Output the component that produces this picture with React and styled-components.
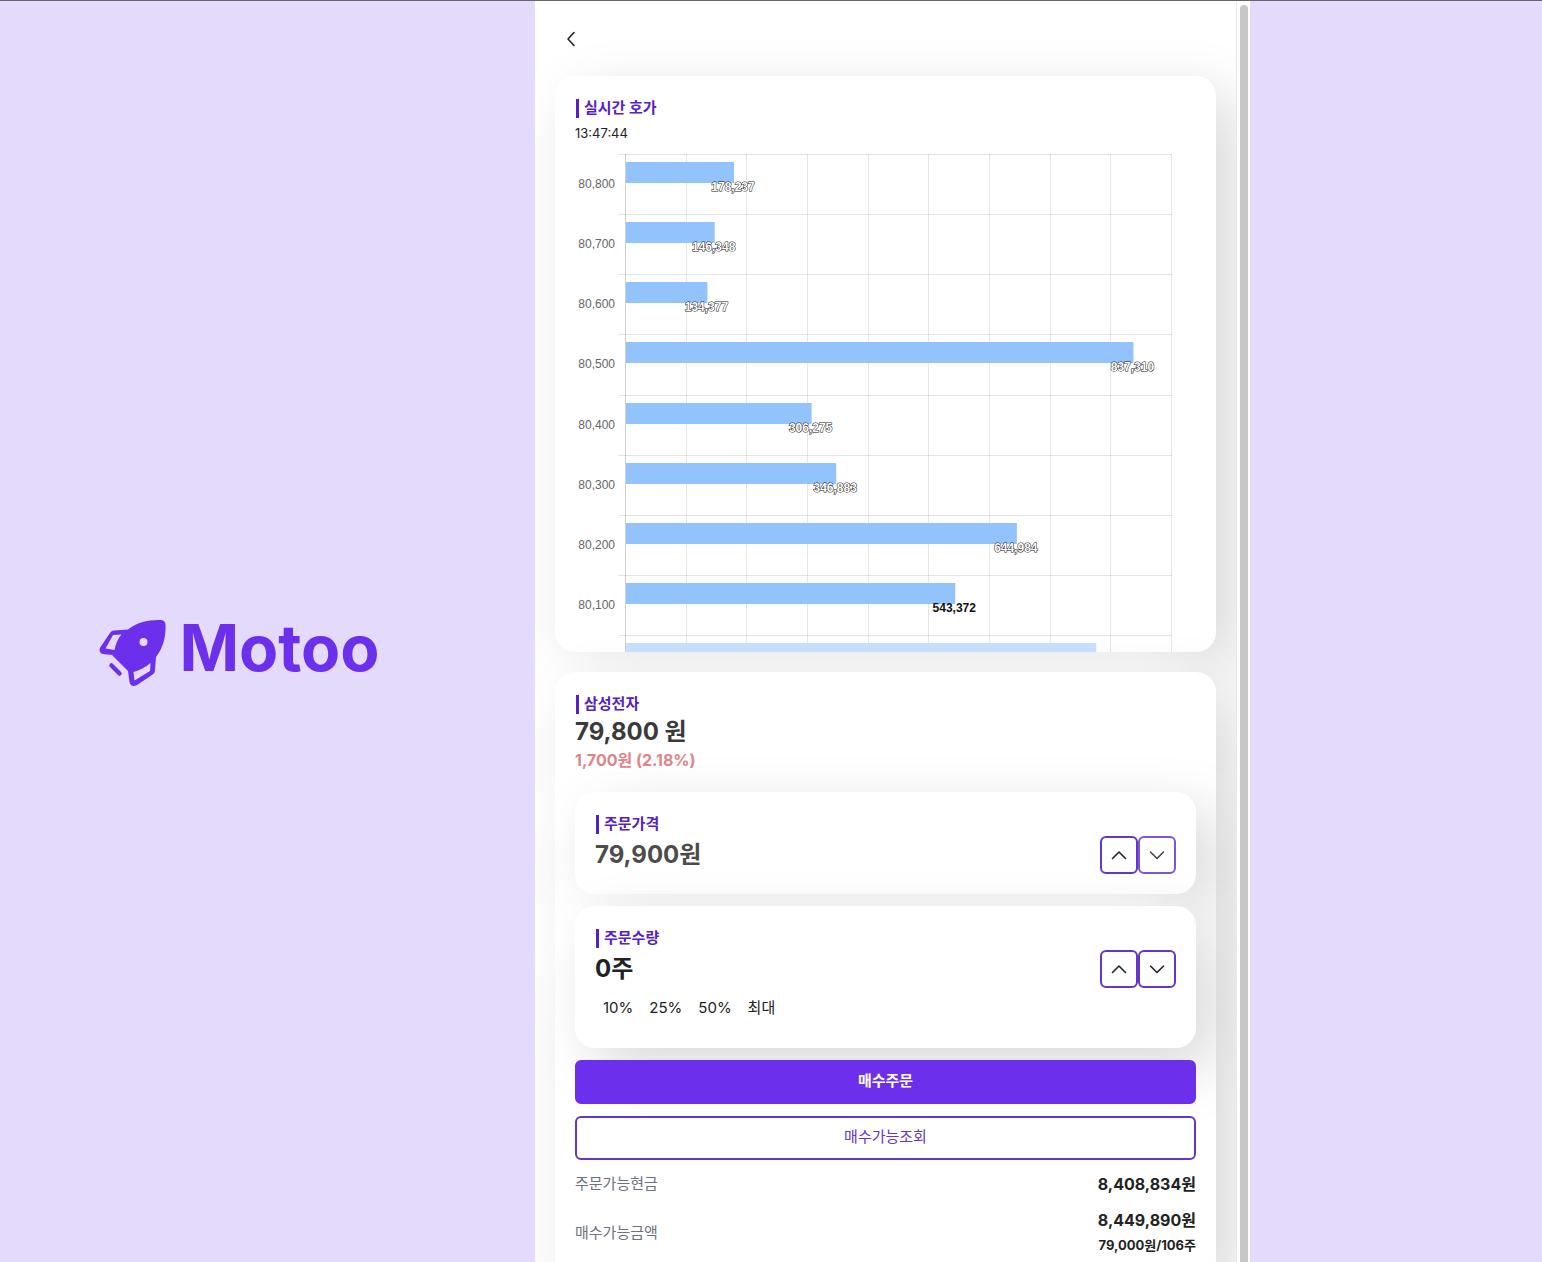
import React, { useId, useState } from "react";
import styled, { createGlobalStyle } from "styled-components";

const GlobalStyle = createGlobalStyle`
  *, *::before, *::after { box-sizing: border-box; }
  body {
    margin: 0;
    color: #222;
    font-family: Inter, "Noto Sans CJK KR", sans-serif;
  }
  h1, h2, p, dl, dd { margin: 0; }
  button { font-family: inherit; cursor: pointer; }
`;

const Page = styled.div`
  display: grid;
  grid-template-columns: minmax(0, 1fr) minmax(0, 716px) minmax(0, 291px);
  height: 100vh;
  background: #e4dafc;
  border-top: 1px solid #666;
`;

const Brand = styled.aside`
  display: flex;
  align-items: center;
  justify-content: center;
  gap: 12px;
  padding: 42px 56px 0 0;
  color: #6c30ec;
`;

const Wordmark = styled.h1`
  padding-bottom: 10px;
  font-size: 64px;
  line-height: 80px;
  font-weight: 700;
`;

const Screen = styled.main`
  display: flex;
  min-width: 0;
  min-height: 0;
  background: #fff;
`;

const Scroller = styled.div`
  flex: 1;
  min-width: 0;
  overflow-y: auto;
  overflow-x: hidden;
  scrollbar-width: none;
  padding: 20px 20px 40px;
`;

const Rail = styled.div`
  flex: none;
  width: 15px;
  padding: 4px 2px 0 3px;
  overflow: hidden;
  background: #fff;
  border-left: 1px solid #e8e8e8;
  border-right: 1px solid #e0e0e0;
`;

const Thumb = styled.div`
  width: 8px;
  height: 120%;
  border-radius: 4px;
  background: #c7c7c7;
`;

const BackButton = styled.button`
  display: flex;
  align-items: center;
  justify-content: center;
  width: 32px;
  height: 36px;
  margin-bottom: 19px;
  padding: 0;
  border: 0;
  background: none;
  color: #222;
`;

const Card = styled.section`
  padding: 20px;
  border-radius: 20px;
  background: #fff;
  box-shadow: 20px 20px 60px #d9d9d9, -20px -20px 60px #fff;
`;

const QuoteCard = styled(Card)`
  height: 576px;
  margin-bottom: 20px;
  overflow: hidden;
`;

const OrderCard = styled(Card)`
  margin-bottom: 12px;
`;

const Title = styled.h2`
  display: flex;
  align-items: center;
  gap: 5px;
  height: 24px;
  font-size: 15px;
  line-height: 24px;
  font-weight: 700;
  color: #5321c6;

  &::before {
    content: "";
    width: 3px;
    height: 19px;
    margin-left: 1px;
    background: #5321c6;
  }
`;

const Clock = styled.p`
  font-size: 13px;
  line-height: 26px;
`;

const Price = styled.p`
  font-size: 24px;
  line-height: 32px;
  font-weight: 700;
  color: ${(p) => p.$color || "#222"};
`;

const Change = styled.p`
  margin-bottom: 20px;
  font-size: 16px;
  line-height: 24px;
  font-weight: 700;
  color: #de8587;
`;

const OrderRow = styled.div`
  display: flex;
  align-items: center;
  justify-content: space-between;
  height: 38px;
`;

const Stepper = styled.div`
  display: flex;
`;

const StepButton = styled.button`
  display: flex;
  align-items: center;
  justify-content: center;
  width: 38px;
  height: 38px;
  padding: 0;
  border: 2px solid ${(p) => (p.$soft ? "#7d55d6" : "#6335c8")};
  border-radius: 6px;
  background: #fff;
  color: ${(p) => (p.$soft ? "#444" : "#222")};
`;

const Ratios = styled.div`
  display: flex;
  gap: 16px;
  padding: 8px 8px;
`;

const Ratio = styled.button`
  padding: 0;
  border: 0;
  background: none;
  font-size: 15px;
  line-height: 24px;
  color: #222;
`;

const Action = styled.button`
  display: block;
  width: 100%;
  height: 44px;
  margin-bottom: 12px;
  border: 2px solid ${(p) => (p.$primary ? "#6c30ec" : "#6335c8")};
  border-radius: 6px;
  background: ${(p) => (p.$primary ? "#6c30ec" : "#fff")};
  color: ${(p) => (p.$primary ? "#fff" : "#6335c8")};
  font-size: 15px;
  font-weight: ${(p) => (p.$primary ? 700 : 400)};
  line-height: 20px;
  padding: 0 0 2px;
`;

const Summary = styled.dl`
  display: grid;
  gap: 12px;
`;

const SummaryRow = styled.div`
  display: flex;
  align-items: center;
  justify-content: space-between;
`;

const Term = styled.dt`
  font-size: 15px;
  line-height: 24px;
  color: #6b7280;
`;

const Amount = styled.dd`
  font-size: 16px;
  line-height: 24px;
  font-weight: 700;
  text-align: right;
`;

const Detail = styled.span`
  display: block;
  font-size: 13px;
  line-height: 26px;
`;

const Chart = styled.svg`
  display: block;
  width: 100%;
  height: auto;
  font-family: "Liberation Sans", sans-serif;
`;

const AxisLabel = styled.text`
  font-size: 12px;
  fill: #666;
`;

const ValueLabel = styled.text`
  font-size: 12px;
  font-weight: 700;
  fill: ${(p) => (p.$soft ? "#fff" : "#111")};
  stroke: ${(p) => (p.$soft ? "#111" : "none")};
  stroke-width: ${(p) => (p.$soft ? "1px" : "0")};
  paint-order: stroke;
`;

const quotes = [
  { price: "80,800", value: 178237 },
  { price: "80,700", value: 146348 },
  { price: "80,600", value: 134377 },
  { price: "80,500", value: 837310 },
  { price: "80,400", value: 306275 },
  { price: "80,300", value: 346883 },
  { price: "80,200", value: 644984 },
  { price: "80,100", value: 543372, settled: true },
  { price: "80,000", value: 776000, bid: true },
];

const AXIS = 50;
const STEP_X = 60.65;
const STEP_Y = 60.15;

function QuoteChart() {
  const columns = Array.from({ length: 10 }, (_, i) => Math.round(AXIS + i * STEP_X) + 0.5);
  return (
    <Chart viewBox="0 0 621 520" role="img" aria-label="실시간 호가">
      {columns.map((x, i) => (
        <path key={x} d={`M${x} 8V520`} stroke={i ? "#e6e6e6" : "#cfcfcf"} />
      ))}
      {quotes.map((q, i) => {
        const y = Math.round(8 + i * STEP_Y);
        const end = 51 + (q.value / 100000) * 60.6;
        return (
          <g key={q.price}>
            <path d={`M43 ${y + 0.5}H597`} stroke="#000" strokeOpacity=".1" />
            <rect x="51" y={y + 8} width={end - 51} height="21" fill={q.bid ? "#c6dffb" : "#93c3fd"} />
            {!q.bid && (
              <>
                <AxisLabel x="40" y={y + 34} textAnchor="end">{q.price}</AxisLabel>
                <ValueLabel x={end - 1} y={y + 37} textAnchor="middle" $soft={!q.settled}>
                  {q.value.toLocaleString("en-US")}
                </ValueLabel>
              </>
            )}
          </g>
        );
      })}
    </Chart>
  );
}

function Chevron({ d, w = 16, h = 10 }) {
  return (
    <svg width={w} height={h} viewBox={`0 0 ${w} ${h}`} fill="none" stroke="currentColor" strokeWidth="1.6" strokeLinecap="round" strokeLinejoin="round" aria-hidden="true">
      <path d={d} />
    </svg>
  );
}

function StepPair({ name, onStep, soft }) {
  return (
    <Stepper>
      <StepButton aria-label={`${name} 올리기`} onClick={() => onStep(1)}>
        <Chevron d="M1.5 8.5 8 2l6.5 6.5" />
      </StepButton>
      <StepButton aria-label={`${name} 내리기`} $soft={soft} onClick={() => onStep(-1)}>
        <Chevron d="M1.5 2 8 8.5 14.5 2" />
      </StepButton>
    </Stepper>
  );
}

function Rocket() {
  return (
    <svg width="68" height="68" viewBox="0 0 68 68" aria-hidden="true">
      <path
        fill="currentColor"
        fillRule="evenodd"
        d="M29 10.500C38 3 50 .5 62 1C65 1.200 66.500 3 66.500 6C67 18 64 29 57 38L56 51C56 53 55 55 53 56L38 66C34 68 31 66.500 30.500 63L29 52L13 36L4 35C.5 34.500-.5 31 1.500 28L11 14C12 12.500 13 11.500 15 11.500ZM14 16 6.500 29.500 15.500 31C16.500 26 18.500 20 22.500 15.500ZM34.500 53 35.500 61.500 51 52 51.500 44C46.500 48 40.500 51.500 34.500 53ZM44.500 19A4 4 0 1 0 44.500 27A4 4 0 1 0 44.500 19Z"
      />
      <path d="m12.500 46.500 8 8" stroke="currentColor" strokeWidth="4.500" strokeLinecap="round" />
    </svg>
  );
}

export default function App() {
  const quoteId = useId();
  const stockId = useId();
  const [price, setPrice] = useState(79900);
  const [count, setCount] = useState(0);

  return (
    <>
      <GlobalStyle />
      <Page>
        <Brand>
          <Rocket />
          <Wordmark>Motoo</Wordmark>
        </Brand>
        <Screen>
          <Scroller>
            <BackButton aria-label="뒤로">
              <Chevron w={10} h={16} d="M8 1.500 2 8l6 6.500" />
            </BackButton>
            <QuoteCard aria-labelledby={quoteId}>
              <Title id={quoteId}>실시간 호가</Title>
              <Clock>13:47:44</Clock>
              <QuoteChart />
            </QuoteCard>
            <Card aria-labelledby={stockId}>
              <Title id={stockId}>삼성전자</Title>
              <Price $color="#3a3a3a">79,800 원</Price>
              <Change>1,700원 (2.18%)</Change>
              <OrderCard>
                <Title>주문가격</Title>
                <OrderRow>
                  <Price $color="#4c4c4c">{price.toLocaleString("en-US")}원</Price>
                  <StepPair name="주문가격" soft onStep={(n) => setPrice(price + n * 100)} />
                </OrderRow>
              </OrderCard>
              <OrderCard>
                <Title>주문수량</Title>
                <OrderRow>
                  <Price>{count}주</Price>
                  <StepPair name="주문수량" onStep={(n) => setCount(Math.max(0, count + n))} />
                </OrderRow>
                <Ratios>
                  <Ratio onClick={() => setCount(10)}>10%</Ratio>
                  <Ratio onClick={() => setCount(26)}>25%</Ratio>
                  <Ratio onClick={() => setCount(53)}>50%</Ratio>
                  <Ratio onClick={() => setCount(106)}>최대</Ratio>
                </Ratios>
              </OrderCard>
              <Action $primary>매수주문</Action>
              <Action>매수가능조회</Action>
              <Summary>
                <SummaryRow>
                  <Term>주문가능현금</Term>
                  <Amount>8,408,834원</Amount>
                </SummaryRow>
                <SummaryRow>
                  <Term>매수가능금액</Term>
                  <Amount>
                    8,449,890원
                    <Detail>79,000원/106주</Detail>
                  </Amount>
                </SummaryRow>
              </Summary>
            </Card>
          </Scroller>
          <Rail>
            <Thumb />
          </Rail>
        </Screen>
      </Page>
    </>
  );
}
